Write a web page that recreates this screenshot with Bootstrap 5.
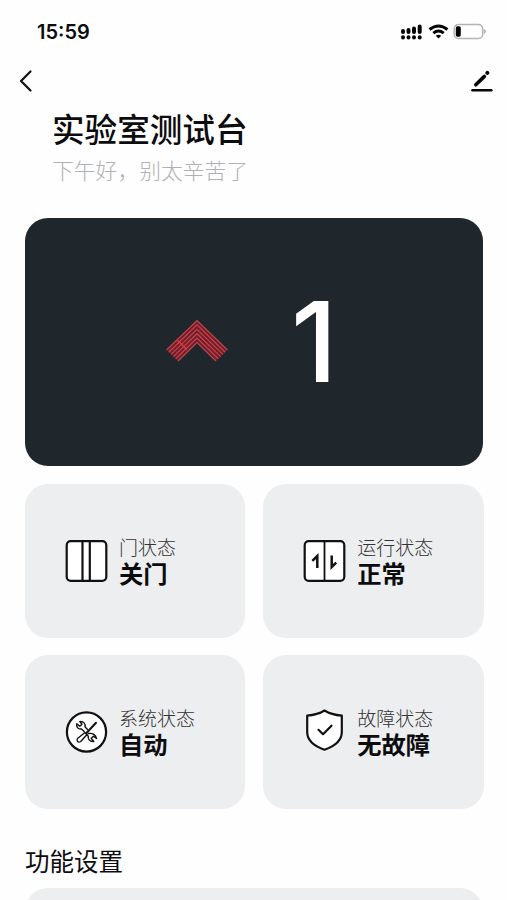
<!DOCTYPE html>
<html lang="zh-CN">
<head>
<meta charset="utf-8">
<meta name="viewport" content="width=device-width, initial-scale=1">
<title>实验室测试台</title>
<link href="https://cdn.jsdelivr.net/npm/bootstrap@5.3.0/dist/css/bootstrap.min.css" rel="stylesheet">
<style>
body{font-family:"Noto Sans CJK SC",sans-serif;color:#0c0c0e;background:#fefefe}
.screen{width:507px;height:900px}
.status-bar{height:62px;padding:0 20px 0 37px}
.clock{font:600 20px/1 Inter,sans-serif;padding-top:2px}
.nav-row{height:38px;padding:0 14px 0 17px}
.heading{padding:8px 0 0 52px}
.heading h1{font-size:32.6px;line-height:39px;font-weight:500}
.heading p{font-size:21.8px;line-height:30px;font-weight:300;color:#b0b1b5;margin-top:8px}
.hero{height:248px;margin:33px 24px 18px 25px;border-radius:23px;background:#1f262c}
.arrow-up{margin:0 62px 3px 140px}
.floor{font:500 111.500px/1 Inter,sans-serif;color:#fff}
.tiles{padding:0 23.5px 0 25px;display:grid;grid-template-columns:1fr 1fr;gap:17px 18px}
.tile{height:154px;border-radius:23px;background:#edeef0;padding-left:40px;gap:11px}
.tile-text{padding-bottom:3px}
.tile-label{font-size:19px;line-height:26px;font-weight:300;color:#333}
.tile-value{font-size:24.3px;line-height:25px;font-weight:700}
.section-title{font-size:24.5px;line-height:36px;font-weight:400;margin:34px 0 9px 25px}
.panel{height:60px;margin:0 24px 0 25px;border-radius:23px;background:#edeef0}
svg{display:block;flex:none}
</style>
</head>
<body>
<main class="screen overflow-hidden">
  <div class="status-bar d-flex align-items-center justify-content-between">
    <span class="clock">15:59</span>
    <svg width="88" height="20" viewBox="0 0 88 20">
      <g stroke="#050505" stroke-width="4" stroke-linecap="round">
        <path d="M4 10v1M9.5 9v2M15 7.500v3.500M20.700 5.500v5.500"/>
        <path d="M4 16.300v.1M9.500 16.300v.1M15 16.300v.1M20.700 16.300v.1"/>
      </g>
      <g fill="none" stroke="#050505" stroke-width="2.900">
        <path d="M30.500 8.500Q39.500 1.500 48.500 8.500"/>
        <path d="M34.300 12.200Q39.500 8 44.700 12.200"/>
      </g>
      <path d="M36.800 14.800Q39.500 12.700 42.200 14.800L39.500 17.500z" fill="#050505"/>
      <rect x="55.200" y="3.500" width="28.500" height="14" rx="4.300" fill="none" stroke="#b3b3b3" stroke-width="1.500"/>
      <rect x="56.800" y="5.200" width="5" height="10.600" rx="1.700" fill="#050505"/>
      <path d="M85.300 8.300q2.800 2.200 0 4.400z" fill="#b3b3b3" stroke="#b3b3b3" stroke-width=".8"/>
    </svg>
  </div>
  <nav class="nav-row d-flex align-items-center justify-content-between">
    <svg width="18" height="24" viewBox="0 0 18 24" fill="none" stroke="#111" stroke-width="2.200" stroke-linecap="round" stroke-linejoin="round"><path d="M13.500 2.500 4 12l9.500 9.500"/></svg>
    <svg width="24" height="24" viewBox="0 0 24 24" stroke="#050505" stroke-linecap="round"><path d="M6.800 15.800 15.400 7.400" stroke-width="3.600"/><path d="M18.300 3.900l.1-.1" stroke-width="4"/><path d="M3.500 21.300h18.800" stroke-width="2.600"/></svg>
  </nav>
  <header class="heading">
    <h1 class="mb-0">实验室测试台</h1>
    <p class="mb-0">下午好，别太辛苦了</p>
  </header>
  <section class="hero d-flex align-items-center">
    <svg class="arrow-up" width="64" height="44" viewBox="0 0 64 44">
      <path d="M2 31 32 1 62 31 51 42 32 23 13 42z" fill="#761c27"/>
      <g fill="none" stroke="#bd4650" stroke-width="1.200">
        <path d="M1.500 31 32 1.500 62.500 31"/>
        <path d="M3.800 33.200 32 5.900 60.200 33.200"/>
        <path d="M6.100 35.400 32 10.300 57.900 35.400"/>
        <path d="M8.400 37.600 32 14.700 55.600 37.600"/>
        <path d="M10.700 39.800 32 19.100 53.300 39.800"/>
        <path d="M13 42 32 23.500 51 42"/>
      </g>
      <path d="M12.500 21.500 22 30.500" stroke="#e13640" stroke-width="1.600"/>
    </svg>
    <span class="floor">1</span>
  </section>
  <section class="tiles">
    <div class="tile d-flex align-items-center">
      <svg width="43" height="43" viewBox="0 0 43 43" fill="none" stroke="#111" stroke-width="2.200"><rect x="1.700" y="1.200" width="39.600" height="39.600" rx="4" fill="#fff"/><path d="M17.500 1.500v39M24.800 1.500v39"/></svg>
      <div class="tile-text"><div class="tile-label">门状态</div><div class="tile-value">关门</div></div>
    </div>
    <div class="tile d-flex align-items-center">
      <svg width="43" height="43" viewBox="0 0 43 43" fill="none" stroke="#111" stroke-width="2.200"><rect x="1.700" y="1.200" width="39.600" height="39.600" rx="4" fill="#fff"/><path d="M21.500 1.500v39" stroke-width="1.800"/><path d="M14.300 28V16l-5 4.800M28.700 15.500v11.500l4.500-4.300" stroke-width="2.500"/></svg>
      <div class="tile-text"><div class="tile-label">运行状态</div><div class="tile-value">正常</div></div>
    </div>
    <div class="tile d-flex align-items-center">
      <svg width="43" height="43" viewBox="0 0 43 43" fill="none" stroke="#111" stroke-linecap="round" stroke-linejoin="round"><circle cx="21.500" cy="21" r="19.600" fill="#fff" stroke-width="2.200"/>
        <g stroke-width="1.400"><path d="M19.200 20.500 16.500 18c-3.500.5-5.500-2.500-4.700-5.200l3 2.500 2.200-2-2.200-2.700c3.700-.5 6 2.200 5.200 5.200l2.500 2.700"/><path d="M23.500 22.500c4-.8 7.500 1.500 8 5l-3-2.300-2.300 2 2.600 3.300c-4 .3-6.300-2.300-5.500-5.300l-2.300-2.500"/><path d="M20 21.500l2 2-6.300 7c-2.500 1.700-4.700-.5-3.200-3z"/></g><path d="M21.500 22 31 11.700" stroke-width="2"/></svg>
      <div class="tile-text"><div class="tile-label">系统状态</div><div class="tile-value">自动</div></div>
    </div>
    <div class="tile d-flex align-items-center">
      <svg width="43" height="47" viewBox="0 -2 43 47" fill="none" stroke="#111" stroke-width="2.200" stroke-linecap="round" stroke-linejoin="round"><path d="M21.500-.5C16 3 10 4.200 4.200 4.600V21c0 8.500 7.500 14.300 17.300 17.700 9.800-3.400 17.300-9.200 17.300-17.700V4.600C33 4.200 27 3 21.500-.5z" fill="#fff"/><path d="M15.500 18.800l4.500 4.400 8.500-8.500"/></svg>
      <div class="tile-text"><div class="tile-label">故障状态</div><div class="tile-value">无故障</div></div>
    </div>
  </section>
  <h2 class="section-title">功能设置</h2>
  <div class="panel"></div>
</main>
<script src="https://cdn.jsdelivr.net/npm/bootstrap@5.3.0/dist/js/bootstrap.bundle.min.js"></script>
</body>
</html>
